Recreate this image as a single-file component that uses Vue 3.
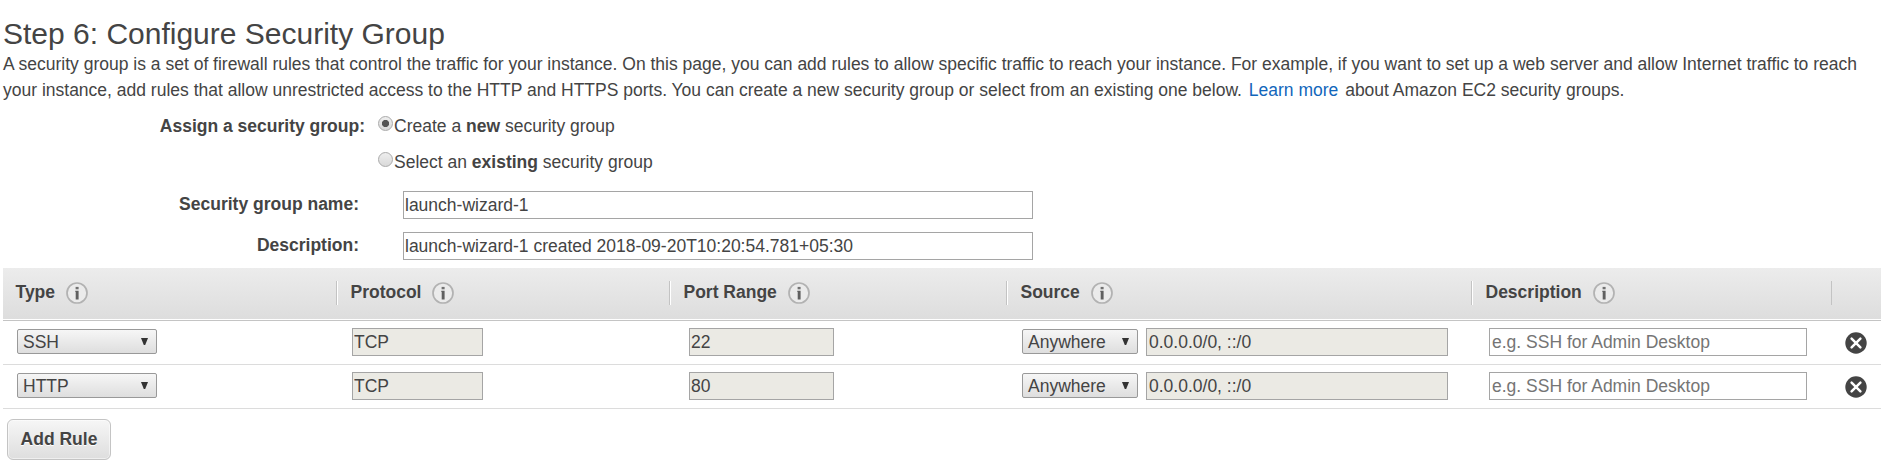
<script setup>
import { ref } from 'vue'

const groupMode = ref('new')
const groupName = ref('launch-wizard-1')
const groupDescription = ref('launch-wizard-1 created 2018-09-20T10:20:54.781+05:30')
const columns = ['Type', 'Protocol', 'Port Range', 'Source', 'Description']
const rules = ref([
  { type: 'SSH', protocol: 'TCP', port: '22', source: 'Anywhere', cidr: '0.0.0.0/0, ::/0', note: '' },
  { type: 'HTTP', protocol: 'TCP', port: '80', source: 'Anywhere', cidr: '0.0.0.0/0, ::/0', note: '' },
])
const addRule = () => rules.value.push({ ...rules.value[0] })
const removeRule = (i) => rules.value.splice(i, 1)
</script>

<template>
  <main class="page">
    <h1>Step 6: Configure Security Group</h1>
    <p class="intro">
      A security group is a set of firewall rules that control the traffic for your instance. On this page, you can add rules to allow specific traffic to reach your instance. For example, if you want to set up a web server and allow Internet traffic to reach your instance, add rules that allow unrestricted access to the HTTP and HTTPS ports. You can create a new security group or select from an existing one below.
      <a class="link">Learn more</a> about Amazon EC2 security groups.
    </p>

    <section class="form">
      <div class="choices">
        <div class="choice">
          <span class="label wide">Assign a security group:</span>
          <label class="option"><input v-model="groupMode" class="radio" type="radio" value="new"><span>Create a <b>new</b> security group</span></label>
        </div>
        <div class="choice">
          <span class="label wide"></span>
          <label class="option"><input v-model="groupMode" class="radio" type="radio" value="existing"><span>Select an <b>existing</b> security group</span></label>
        </div>
      </div>
      <div class="field">
        <label class="label">Security group name:</label>
        <input v-model="groupName" class="text" type="text">
      </div>
      <div class="field">
        <label class="label">Description:</label>
        <input v-model="groupDescription" class="text" type="text">
      </div>
    </section>

    <section class="table">
      <div class="head cols">
        <div v-for="name in columns" :key="name" class="th">
          <span>{{ name }}</span>
          <svg class="info" viewBox="0 0 22 22">
            <circle cx="11" cy="11" r="10" fill="#ebebeb" stroke="#b2b2b2" stroke-width="1.7" />
            <rect x="9.6" y="4.9" width="3" height="2.4" fill="#707070" />
            <path d="M9.3 8.8h3.3v8.7H9.7V10h-.4z" fill="#606060" />
          </svg>
        </div>
        <div class="th"></div>
      </div>
      <div v-for="(rule, i) in rules" :key="i" class="row cols">
        <div class="td type">
          <div class="select">
            <span>{{ rule.type }}</span>
            <svg class="arrow" viewBox="0 0 7 7"><path d="M0 0h7L4.2 7H2.8z" fill="#333" /></svg>
          </div>
        </div>
        <div class="td protocol"><input class="text" type="text" :value="rule.protocol" disabled></div>
        <div class="td port"><input class="text" type="text" :value="rule.port" disabled></div>
        <div class="td source">
          <div class="select">
            <span>{{ rule.source }}</span>
            <svg class="arrow" viewBox="0 0 7 7"><path d="M0 0h7L4.2 7H2.8z" fill="#333" /></svg>
          </div>
          <input class="text" type="text" :value="rule.cidr" disabled>
        </div>
        <div class="td note"><input v-model="rule.note" class="text" type="text" placeholder="e.g. SSH for Admin Desktop"></div>
        <div class="td action">
          <svg class="remove" viewBox="0 0 22 22" @click="removeRule(i)">
            <circle cx="11" cy="11" r="10.7" fill="#444" />
            <path d="M6.6 6.6l8.8 8.8M15.4 6.6l-8.8 8.8" stroke="#fff" stroke-width="2.5" stroke-linecap="round" />
          </svg>
        </div>
      </div>
    </section>

    <button class="add" type="button" @click="addRule">Add Rule</button>
  </main>
</template>

<style>
body {
  background: #fff;
}
</style>

<style scoped>
.page {
  box-sizing: border-box;
  height: 471px;
  padding: 16px 4px 0 3px;
  overflow: hidden;
  color: #444;
  font: 17.5px/26px "Liberation Sans", Arial, sans-serif;
}
h1 {
  margin: 0 0 -1px;
  font-size: 30px;
  font-weight: 400;
  line-height: 36px;
}
.intro {
  margin: 0;
}
.link {
  margin: 0 2px;
  color: #1166bb;
}
.form {
  height: 165px;
  padding-top: 10px;
  box-sizing: border-box;
}
.choice {
  display: flex;
  height: 36px;
}
.label {
  width: 356px;
  flex: none;
  text-align: right;
  font-weight: 700;
}
.label.wide {
  width: 362px;
}
.option {
  display: flex;
  margin-left: 13px;
}
.radio {
  appearance: none;
  box-sizing: border-box;
  width: 15px;
  height: 15px;
  margin: 3px 1px 0 0;
  border: 1px solid #aaa;
  border-radius: 50%;
  background: linear-gradient(#eee, #d9d9d9);
}
.radio:checked {
  background: radial-gradient(circle, #555 3.2px, transparent 4px), linear-gradient(#eee, #d9d9d9);
}
.field {
  display: flex;
  height: 41px;
  padding-top: 6px;
  box-sizing: border-box;
}
.text {
  box-sizing: border-box;
  height: 28px;
  margin: 0;
  padding: 0 1px;
  border: 1px solid #a5a5a5;
  border-radius: 0;
  outline: 0;
  background: #fff;
  color: #444;
  font: 17.5px "Liberation Sans", Arial, sans-serif;
}
.text:disabled {
  background: #ebeae4;
}
.text::placeholder {
  color: #757575;
}
.field .text {
  width: 630px;
  margin-left: 44px;
}
.cols {
  display: grid;
  grid-template-columns: 333px 333px 337px 465px 360px 50px;
}
.head {
  height: 53px;
  box-sizing: border-box;
  border-bottom: 1px solid #c4c4c4;
  background: linear-gradient(#ececec, #dddddd) 0 0 / 100% 51px no-repeat;
}
.th {
  display: flex;
  align-items: flex-start;
  height: 24px;
  margin-top: 13px;
  padding-left: 13.5px;
  border-left: 1px solid #c3c3c3;
  box-shadow: inset 1px 0 #fff;
  font-weight: 700;
  line-height: 22px;
}
.th:first-child {
  padding-left: 12.5px;
  border-left: 0;
  box-shadow: none;
}
.th:last-child {
  box-shadow: none;
}
.info {
  width: 22px;
  height: 22px;
  margin: 1px 0 0 11px;
}
.row {
  height: 44px;
  box-sizing: border-box;
  border-bottom: 1px solid #dcdcdc;
}
.td {
  display: flex;
  align-items: flex-start;
  padding-top: 7px;
}
.select {
  display: flex;
  align-items: flex-start;
  justify-content: space-between;
  box-sizing: border-box;
  height: 25px;
  margin-top: 1px;
  padding: 0 8px 0 5px;
  border: 1px solid #999;
  border-radius: 2px;
  background: linear-gradient(#f6f6f6, #dedede);
  line-height: 25px;
}
.arrow {
  width: 7px;
  height: 7px;
  margin-top: 8px;
}
.type {
  padding-left: 14px;
}
.type .select {
  width: 140px;
}
.protocol {
  padding-left: 16px;
}
.protocol .text {
  width: 131px;
}
.port {
  padding-left: 20px;
}
.port .text {
  width: 145px;
}
.source {
  gap: 8px;
  padding-left: 16px;
}
.source .select {
  width: 116px;
}
.source .text {
  width: 302px;
  padding-left: 2px;
}
.note {
  padding-left: 18px;
}
.note .text {
  width: 318px;
  padding-left: 2px;
}
.action {
  padding-left: 13.5px;
}
.remove {
  width: 22px;
  height: 22px;
  margin-top: 4px;
}
.add {
  display: block;
  box-sizing: border-box;
  width: 104px;
  height: 41px;
  margin: 10px 0 0 4px;
  padding: 0;
  border: 1px solid #c4c4c4;
  border-radius: 6px;
  background: linear-gradient(#f6f6f6, #dedede);
  box-shadow: inset 0 0 0 1px rgba(255, 255, 255, 0.5);
  color: #444;
  font: bold 17.5px "Liberation Sans", Arial, sans-serif;
  text-shadow: 0 1px #fff;
}
</style>
